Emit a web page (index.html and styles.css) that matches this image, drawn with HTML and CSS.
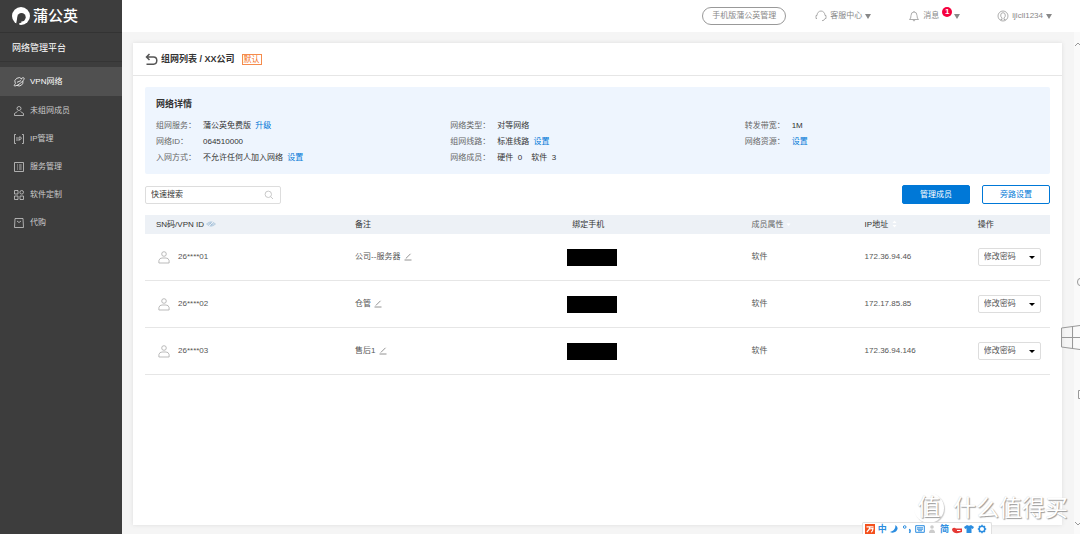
FILE: index.html
```html
<!DOCTYPE html>
<html lang="zh-CN">
<head>
<meta charset="utf-8">
<title>蒲公英 网络管理平台</title>
<link rel="stylesheet" href="styles.css">
</head>
<body>
<div class="app">
  <aside class="sidebar">
    <div class="brand">
      <svg class="brand-mark" viewBox="0 0 18 18"><circle cx="9" cy="9" r="9" fill="#fff"/><circle cx="9.500" cy="10.300" r="4.200" fill="#3d3d3d"/><path d="M5.300 10.500L4 17.500L7.500 18.500L7 16.500L9.500 15.500L9 13Z" fill="#3d3d3d"/></svg>
      <span>蒲公英</span>
    </div>
    <div class="platform">网络管理平台</div>
    <nav class="menu">
      <a class="menu-item active" href="#"><svg viewBox="0 0 12 12"><path d="M2.300 7.500A4 4 0 0 1 9 3.200M9.900 5A4 4 0 0 1 4 9.400"/><path d="M2.600 7.500C-.5 10.500 2 10.800 6 8.200S12.500 2 10.500 1.800 8.500 2.800 8.500 2.800M4 6.300L8 4.600"/></svg>VPN网络</a>
      <a class="menu-item" href="#"><svg viewBox="0 0 12 12"><circle cx="6" cy="3.500" r="2"/><path d="M4.500 6.500L1.500 8.500V10.500H10.500V8.500L7.500 6.500"/></svg>未组网成员</a>
      <a class="menu-item" href="#"><svg viewBox="0 0 12 12"><path d="M3 1.500H1.500V10.500H3M9 1.500H10.500V10.500H9M4 4V8M6 8V4H7.200Q8.300 4 8.300 5.200T7.200 6.400H6"/></svg>IP管理</a>
      <a class="menu-item" href="#"><svg viewBox="0 0 12 12"><path d="M1.500 1.500H10.500V10.500H1.500ZM4 4H5M6 4H8.700M4 6H5M6 6H8.700M4 8H5M6 8H8.700"/></svg>服务管理</a>
      <a class="menu-item" href="#"><svg viewBox="0 0 12 12"><path d="M1.500 1.500H5V5H1.500ZM1.500 7H5V10.500H1.500ZM7 7H10.500V10.500H7Z"/><circle cx="8.700" cy="3.300" r="1.800"/></svg>软件定制</a>
      <a class="menu-item" href="#"><svg viewBox="0 0 12 12"><path d="M2 1.500H10L10.500 10.500H1.500ZM4 4L6 5.500L8 4"/></svg>代购</a>
    </nav>
  </aside>

  <div class="content">
    <header class="topbar">
      <button class="pill" type="button">手机版蒲公英管理</button>
      <button class="top-item" type="button"><svg class="top-icon" viewBox="0 0 12 12"><path d="M2 8.500H1V5.500H2A4 4.500 0 0 1 10 5.500H11V8.500H10Q9.500 10.700 7 10.700"/></svg>客服中心<i class="caret"></i></button>
      <button class="top-item" type="button"><svg class="top-icon" viewBox="0 0 12 12"><path d="M1.500 9.500Q3 8.500 3 5.500Q3 2 6 2T9 5.500Q9 8.500 10.500 9.500ZM6 1V2M4.800 10.200Q6 11.800 7.200 10.200"/></svg>消息<span class="count">1</span><i class="caret"></i></button>
      <button class="top-item" type="button"><svg class="top-icon" viewBox="0 0 12 12"><circle cx="6" cy="6" r="5"/><path d="M3.500 9.500H5V8Q3.600 7 3.700 5Q4 2.700 6 2.700T8.300 5Q8.400 7 7 8V9.500H8.500"/></svg>ljlcll1234<i class="caret"></i></button>
    </header>

    <main class="page">
      <section class="card">
        <div class="card-head">
          <a class="back" href="#" aria-label="返回"><svg viewBox="0 0 13 13"><path d="M4.500 1L1.500 4L4.500 7M1.500 4H8.500Q11.800 4 11.800 7.500T8.500 11.200H1.500" fill="none" stroke="#555" stroke-width="1.500"/></svg></a>
          <h1>组网列表 / XX公司</h1>
          <span class="tag">默认</span>
        </div>

        <div class="card-body">
          <section class="details">
            <h2>网络详情</h2>
            <div class="detail-grid">
              <dl>
                <div><dt>组网服务：</dt><dd>蒲公英免费版 <a href="#">升级</a></dd></div>
                <div><dt>网络ID：</dt><dd>064510000</dd></div>
                <div><dt>入网方式：</dt><dd>不允许任何人加入网络 <a href="#">设置</a></dd></div>
              </dl>
              <dl>
                <div><dt>网络类型：</dt><dd>对等网络</dd></div>
                <div><dt>组网线路：</dt><dd>标准线路 <a href="#">设置</a></dd></div>
                <div><dt>网络成员：</dt><dd><span>硬件&nbsp; 0</span><span class="soft">软件&nbsp; 3</span></dd></div>
              </dl>
              <dl>
                <div><dt>转发带宽：</dt><dd>1M</dd></div>
                <div><dt>网络资源：</dt><dd><a class="only" href="#">设置</a></dd></div>
              </dl>
            </div>
          </section>

          <div class="tools">
            <label class="search">
              <input type="text" placeholder="快速搜索" aria-label="快速搜索">
              <svg viewBox="0 0 10 10"><circle cx="4.300" cy="4.300" r="3.200"/><path d="M6.700 6.700L9 9"/></svg>
            </label>
            <div class="actions">
              <button class="btn primary" type="button">管理成员</button>
              <button class="btn" type="button">旁路设置</button>
            </div>
          </div>

          <table class="members">
            <colgroup><col class="c-id"><col class="c-note"><col class="c-phone"><col class="c-attr"><col class="c-ip"><col></colgroup>
            <thead>
              <tr>
                <th>SN码/VPN ID <svg class="eye" viewBox="0 0 10 8"><path d="M.5 4Q5 -.5 9.500 4Q5 8.500 .5 4Z" fill="#c8d9e8" stroke="#a9c2d8" stroke-width=".6"/><circle cx="5" cy="4" r="1.500" fill="#a4bfd8"/><path d="M2 7L8 1" stroke="#edf1f6"/></svg></th>
                <th>备注</th>
                <th>绑定手机</th>
                <th class="muted">成员属性 <svg class="sort" viewBox="0 0 5 8"><path d="M.5 3.500H4.500L2.500 6Z"/></svg></th>
                <th>IP地址 <svg class="sort gap" viewBox="0 0 5 8"><path d="M.5 3H4.500L2.500 .5ZM.5 5H4.500L2.500 7.500Z"/></svg></th>
                <th>操作</th>
              </tr>
            </thead>
            <tbody>
              <tr>
                <td><div class="member"><svg viewBox="0 0 12 13"><circle cx="6" cy="3" r="2.300"/><path d="M.9 12V9.500Q1.500 7 4 7H8Q10.500 7 11.100 9.500V12Z"/></svg>26****01</div></td>
                <td>公司--服务器 <svg class="pen" viewBox="0 0 8 8"><path d="M.5 7H7.500M1.800 5.500L6.500 .8"/></svg></td>
                <td class="phone"><span class="redacted"></span></td>
                <td>软件</td>
                <td>172.36.94.46</td>
                <td><span class="pick"><select aria-label="操作"><option>修改密码</option></select><i></i></span></td>
              </tr>
              <tr>
                <td><div class="member"><svg viewBox="0 0 12 13"><circle cx="6" cy="3" r="2.300"/><path d="M.9 12V9.500Q1.500 7 4 7H8Q10.500 7 11.100 9.500V12Z"/></svg>26****02</div></td>
                <td>仓管 <svg class="pen" viewBox="0 0 8 8"><path d="M.5 7H7.500M1.800 5.500L6.500 .8"/></svg></td>
                <td class="phone"><span class="redacted"></span></td>
                <td>软件</td>
                <td>172.17.85.85</td>
                <td><span class="pick"><select aria-label="操作"><option>修改密码</option></select><i></i></span></td>
              </tr>
              <tr>
                <td><div class="member"><svg viewBox="0 0 12 13"><circle cx="6" cy="3" r="2.300"/><path d="M.9 12V9.500Q1.500 7 4 7H8Q10.500 7 11.100 9.500V12Z"/></svg>26****03</div></td>
                <td>售后1 <svg class="pen" viewBox="0 0 8 8"><path d="M.5 7H7.500M1.800 5.500L6.500 .8"/></svg></td>
                <td class="phone"><span class="redacted"></span></td>
                <td>软件</td>
                <td>172.36.94.146</td>
                <td><span class="pick"><select aria-label="操作"><option>修改密码</option></select><i></i></span></td>
              </tr>
            </tbody>
          </table>
        </div>
      </section>
    </main>
  </div>

  <div class="scrollbar">
    <svg viewBox="0 0 6 6"><path d="M1 5L4 2L7 5"/></svg>
    <svg viewBox="0 0 6 6"><path d="M1 1L4 4L7 1"/></svg>
  </div>
  <svg class="charms" viewBox="0 0 20 130"><path d="M20 3.500Q17.500 3.500 17.500 7T20 10.500M20 50.500L1.500 53V72L20 74.500M1.500 62.500H20M12.500 51.500V73.500M20 115.500H18.500V123.500H20"/></svg>
  <div class="watermark"><span class="seal">值</span><span>什么值得买</span></div>
  <div class="ime">
    <svg viewBox="0 0 10 10"><path d="M0 0H10V10H0Z" fill="#f4511e"/><path d="M1.500 2.800H8.500M5 2.800Q4.500 6 1.800 8M4.500 5L8 4.500Q7.500 8 6 8" fill="none" stroke="#fff" stroke-width="1.200"/></svg>
    <span>中</span>
    <svg viewBox="0 0 10 10"><path d="M6.500 1Q10.500 4 7 7.500Q4 9.500 1 8Q6.500 6.500 6.500 1Z" fill="#2b8de0"/></svg>
    <svg viewBox="0 0 10 10"><circle cx="2.700" cy="3" r="1.300" fill="none" stroke="#2b8de0"/><path d="M7 5.500Q9 6 7.500 9" fill="none" stroke="#2b8de0" stroke-width="1.500"/></svg>
    <svg viewBox="0 0 10 10"><path d="M.7 1.700H9.300V8.300H.7ZM2 3.800H8M2 5.200H8M3 6.800H7" fill="none" stroke="#2b8de0"/></svg>
    <svg viewBox="0 0 10 10"><circle cx="5" cy="3" r="1.800" fill="#ccc"/><path d="M2 9Q2 5.500 5 5.500T8 9Z" fill="#ccc"/></svg>
    <span>简</span>
    <svg viewBox="0 0 10 10"><path d="M0 5Q2 3 4 4.500H10V8Q5 10 2 8.500Q0 8 0 5Z" fill="#e53935"/><path d="M5 6.500H8.500" stroke="#fff"/></svg>
    <svg viewBox="0 0 10 10"><path d="M3 1Q5 2.500 7 1L10 3L8.800 5L7.500 4.300V9H2.500V4.300L1.200 5L0 3Z" fill="#2b8de0"/></svg>
    <svg viewBox="0 0 10 10"><circle cx="5" cy="5" r="2.800" fill="none" stroke="#2b8de0" stroke-width="1.500"/><path d="M5 .8V2M5 8V9.200M.8 5H2M8 5H9.200M2 2L3 3M7 7L8 8M8 2L7 3M2 8L3 7" stroke="#2b8de0" stroke-width="1.400"/></svg>
  </div>
</div>
</body>
</html>
```

FILE: styles.css
```css
* { box-sizing: border-box; }

body {
  margin: 0;
  font: 8px/16px "Liberation Sans", "Noto Sans CJK SC", sans-serif;
  color: #333;
  background: #f5f5f5;
}

a { color: #0078d7; text-decoration: none; }
button, input, select { font: inherit; color: inherit; }
h1, h2, dl, dd { margin: 0; }
svg { flex: none; }

.app {
  position: relative;
  display: flex;
  min-height: 100vh;
  overflow: hidden;
}

.sidebar { flex: none; width: 122px; background: #3d3d3d; color: #fff; }

.brand {
  display: flex;
  align-items: center;
  gap: 3px;
  height: 32px;
  padding-left: 12px;
  font-size: 15px;
  font-weight: 500;
}

.brand-mark { width: 18px; height: 18px; }

.platform {
  height: 30px;
  padding-left: 12px;
  border-top: 1px solid #333;
  border-bottom: 1px solid #353535;
  font-size: 9px;
  line-height: 30px;
}

.menu { padding-top: 5px; }

.menu-item {
  display: flex;
  align-items: center;
  gap: 5px;
  height: 28px;
  padding-left: 13px;
  color: #ccc;
}

.menu-item.active { background: #505050; color: #fff; height: 29px; margin-bottom: 1px; }
.menu-item svg { width: 12px; height: 12px; fill: none; stroke: currentColor; stroke-width: 0.8; }

.content { display: flex; flex: 1; flex-direction: column; min-width: 0; }

.topbar {
  display: flex;
  align-items: center;
  justify-content: flex-end;
  gap: 37px;
  height: 32px;
  padding-right: 28px;
  background: #fff;
  color: #888;
}

.pill {
  height: 18px;
  margin-right: -8px;
  padding: 0 9px;
  border: 1px solid #999;
  border-radius: 9px;
  background: #fff;
}

.top-item {
  display: flex;
  align-items: center;
  padding: 0;
  border: 0;
  background: none;
}

.top-icon {
  width: 12px;
  height: 12px;
  margin-right: 3px;
  fill: none;
  stroke: #999;
  stroke-width: 0.8;
}

.caret {
  margin-left: 3px;
  border: 3px solid transparent;
  border-top: 5px solid #888;
  border-bottom: 0;
}

.count {
  width: 10px;
  height: 10px;
  margin: 0 0 9px 3px;
  border-radius: 5px;
  background: #f5003d;
  color: #fff;
  font-weight: bold;
  line-height: 10px;
}

.count + .caret { margin-left: 2px; }

.page { display: flex; flex: 1; padding: 11px 18px 9px 11px; }

.card { flex: 1; min-width: 0; background: #fff; box-shadow: 0 0 4px #ddd; }

.card-head {
  display: flex;
  align-items: center;
  height: 33px;
  padding-left: 12px;
  border-bottom: 1px solid #e6e6e6;
}

.back { display: flex; margin-right: 3px; }
.back svg { width: 13px; height: 13px; }
h1 { font-size: 9px; line-height: 18px; }

.tag {
  margin-left: 7px;
  padding: 0 1px;
  border: 1px solid #f58b4c;
  color: #f37022;
  line-height: 9px;
}

.card-body { padding: 11px 12px 0; }

.details {
  padding: 9px 11px 8px;
  border-radius: 2px;
  background: #eef5fe;
}

h2 { margin-bottom: 6px; font-size: 9px; }
.detail-grid { display: grid; grid-template-columns: 1fr 1fr 1fr; }
.detail-grid dl > div { display: flex; }
.detail-grid dt { width: 47px; color: #666; }
.detail-grid dd a { margin-left: 2px; }
.detail-grid dd .only { margin-left: 0; }
.soft { margin-left: 9px; }

.tools { display: flex; justify-content: space-between; margin: 11px 0; }

.search { display: flex; align-items: center; position: relative; }

.search input {
  width: 136px;
  height: 18px;
  padding: 0 20px 0 5px;
  border: 1px solid #ddd;
  border-radius: 2px;
  background: #fff;
}

.search input::placeholder { color: #333; opacity: 1; }

.search svg {
  position: absolute;
  right: 7px;
  width: 10px;
  height: 10px;
  fill: none;
  stroke: #bbb;
  stroke-width: 0.8;
}

.actions { display: flex; gap: 12px; }

.btn {
  width: 68px;
  height: 19px;
  padding: 0;
  border: 1px solid #0078d7;
  border-radius: 2px;
  background: #fff;
  color: #0078d7;
}

.btn.primary { background: #0078d7; color: #fff; }

.members { width: 100%; border-collapse: separate; border-spacing: 0; table-layout: fixed; }
.c-id { width: 22%; }
.c-note { width: 24%; }
.c-phone { width: 19.8%; }
.c-attr, .c-ip { width: 12.5%; }

.members th {
  height: 19px;
  padding: 0 0 0 11px;
  background: #edf1f6;
  font-weight: normal;
  text-align: left;
}

.members th.muted { color: #666; }

.members td {
  height: 47px;
  padding: 0 0 0 11px;
  border-bottom: 1px solid #e6e6e6;
  color: #555;
}

.members td.phone { padding-left: 6px; }

.eye { width: 10px; height: 8px; vertical-align: middle; }
.sort { width: 5px; height: 8px; fill: #fff; vertical-align: middle; }
.sort.gap { margin-left: 2px; }
.pen { width: 8px; height: 8px; margin-left: 1px; fill: none; stroke: #777; stroke-width: 0.8; vertical-align: middle; }

.member { display: flex; align-items: center; gap: 8px; padding-left: 2px; }
.member svg { width: 12px; height: 13px; fill: none; stroke: #aaa; stroke-width: 0.8; }

.redacted { display: block; width: 50px; height: 17px; background: #000; }

.pick { display: flex; align-items: center; position: relative; width: 63px; }

.pick select {
  appearance: none;
  width: 100%;
  height: 18px;
  padding: 0 5px;
  border: 1px solid #ddd;
  border-radius: 2px;
  background: #fff;
}

.pick i {
  position: absolute;
  right: 6px;
  border: 3px solid transparent;
  border-top-color: #000;
  border-bottom: 0;
  pointer-events: none;
}

.scrollbar {
  position: absolute;
  top: 32px;
  right: 0;
  bottom: 0;
  display: flex;
  flex-direction: column;
  justify-content: space-between;
  width: 6px;
  padding: 9px 0 7px;
  background: #fafafa;
}

.scrollbar svg { width: 6px; height: 6px; fill: none; stroke: #999; }

.charms {
  position: absolute;
  top: 275px;
  right: 0;
  width: 20px;
  height: 130px;
  fill: none;
  stroke: #999;
}

.watermark {
  position: absolute;
  right: 12px;
  bottom: 10px;
  display: flex;
  align-items: center;
  gap: 9px;
  color: #fff;
  font-size: 23px;
  line-height: 32px;
  text-shadow: 1px 1px 1px #999, 0 0 1px #ccc;
}

.seal {
  flex: none;
  width: 30px;
  height: 30px;
  border-radius: 15px;
  box-shadow: 1px 1px 1px #ccc;
  line-height: 29px;
  text-align: center;
}

.ime {
  position: absolute;
  right: 88px;
  bottom: 0;
  display: flex;
  align-items: center;
  justify-content: space-between;
  width: 130px;
  height: 12px;
  padding: 1px 4px 0 2px;
  border: 1px solid #e0e0e0;
  border-bottom: 0;
  border-radius: 2px 2px 0 0;
  background: #fff;
  color: #2b8de0;
  font-size: 9px;
  font-weight: bold;
  line-height: 11px;
}

.ime svg { width: 10px; height: 10px; }
```
